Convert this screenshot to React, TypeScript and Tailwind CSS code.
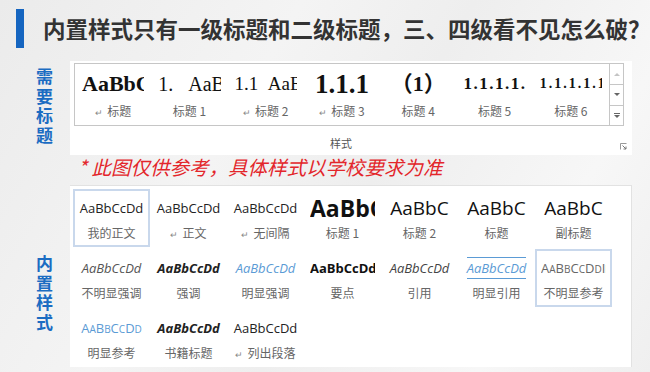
import React from 'react';

const cjk = "font-['Noto_Sans_CJK_SC','Noto_Sans',sans-serif]";
const latin = "font-['Open_Sans','Noto_Sans_CJK_SC',sans-serif]";
const serif = "font-['Liberation_Serif','Noto_Sans_CJK_SC',serif]";

const headings = [
  { sample: 'AaBbCcDd', cls: 'text-[22px] font-bold', label: '标题', mark: true },
  { sample: '1.\u00a0\u00a0\u00a0AaBbCc', cls: 'text-[20px]', label: '标题 1', mark: false },
  { sample: '1.1\u00a0\u00a0AaBbCc', cls: 'text-[19px]', label: '标题 2', mark: true },
  { sample: '1.1.1', cls: 'text-[27px] font-bold', label: '标题 3', mark: true },
  { sample: '（1）', cls: 'text-[22px] font-bold', label: '标题 4', mark: false },
  { sample: '1.1.1.1.', cls: 'text-[17px] font-bold tracking-[1.5px]', label: '标题 5', mark: false },
  { sample: '1.1.1.1.1', cls: 'text-[14px] font-bold tracking-[2px]', label: '标题 6', mark: false },
];

type Item = { sample: string; cls: string; label: string; on?: boolean; mark?: boolean; quote?: boolean; caps?: boolean };

const styles: Item[] = [
  { sample: 'AaBbCcDd', cls: 'text-[13px] text-[#222]', label: '我的正文', on: true },
  { sample: 'AaBbCcDd', cls: 'text-[13px] text-[#222]', label: '正文', mark: true },
  { sample: 'AaBbCcDd', cls: 'text-[13px] text-[#222]', label: '无间隔', mark: true },
  { sample: 'AaBbCcDd', cls: 'text-[23px] font-bold text-[#111]', label: '标题 1' },
  { sample: 'AaBbC', cls: 'text-[19px] text-[#111]', label: '标题 2' },
  { sample: 'AaBbC', cls: 'text-[19px] text-[#111]', label: '标题' },
  { sample: 'AaBbC', cls: 'text-[19px] text-[#111]', label: '副标题' },
  { sample: 'AaBbCcDd', cls: 'text-[13px] italic text-[#555]', label: '不明显强调' },
  { sample: 'AaBbCcDd', cls: 'text-[13px] italic font-bold text-[#222]', label: '强调' },
  { sample: 'AaBbCcDd', cls: 'text-[13px] italic text-[#5b9bd5]', label: '明显强调' },
  { sample: 'AaBbCcDd', cls: 'text-[13px] font-bold text-[#111]', label: '要点' },
  { sample: 'AaBbCcDd', cls: 'text-[13px] italic text-[#444]', label: '引用' },
  { sample: 'AaBbCcDd', cls: 'text-[13px] italic text-[#5b9bd5]', label: '明显引用', quote: true },
  { sample: 'AaBbCcDdIi', cls: 'text-[13px] text-[#666]', label: '不明显参考', on: true, caps: true },
  { sample: 'AaBbCcDd', cls: 'text-[13px] text-[#5b9bd5]', label: '明显参考', caps: true },
  { sample: 'AaBbCcDd', cls: 'text-[13px] italic font-bold text-[#222]', label: '书籍标题' },
  { sample: 'AaBbCcDd', cls: 'text-[13px] text-[#222]', label: '列出段落', mark: true },
];

// fake small caps: lowercase letters drawn as smaller capitals
function SmallCaps({ text }: { text: string }) {
  return (
    <>
      {text.split('').map((c, i) =>
        c === c.toUpperCase() ? (
          <span key={i}>{c}</span>
        ) : (
          <span key={i} className="text-[10px]">{c.toUpperCase()}</span>
        )
      )}
    </>
  );
}

function SideLabel({ text }: { text: string }) {
  return (
    <div className={`w-[17px] flex flex-col text-[17px] leading-[19.5px] font-bold text-[#1b6cc2] ${cjk}`}>
      {text.split('').map((c, i) => (
        <span key={i}>{c}</span>
      ))}
    </div>
  );
}

export default function App() {
  return (
    <div className="w-[650px] h-[372px] overflow-hidden bg-[linear-gradient(120deg,#ebebeb_0%,#f4f4f4_35%,#eeeeee_55%,#f7f7f7_80%,#efefef_100%)]">
      {/* Title */}
      <div className="flex items-center pl-[16px] pt-[9px]">
        <div className="w-[8px] h-[39px] bg-[#1565c0] shrink-0" />
        <h1 className={`ml-[19px] text-[22.5px] leading-[39px] font-bold text-[#333] whitespace-nowrap ${cjk}`}>
          内置样式只有一级标题和二级标题，三、四级看不见怎么破？
        </h1>
      </div>

      {/* Required headings */}
      <div className="flex mt-[13px]">
        <div className="w-[70px] shrink-0 pl-[36px] pt-[5px]">
          <SideLabel text="需要标题" />
        </div>
        <div className="w-[562px] h-[94px] bg-white pl-[4px] pt-[2px] relative">
          <div className="w-[550px] h-[63px] border border-[#c6c6c6] flex">
            <div className="flex-1 grid grid-cols-7">
              {headings.map((h, i) => (
                <div key={i} className="overflow-hidden">
                  <div className={`mx-[7px] h-[40px] leading-[40px] overflow-hidden whitespace-nowrap text-center text-[#111] ${serif} ${h.cls}`}>
                    {h.sample}
                  </div>
                  <div className={`-mt-[3px] h-[20px] leading-[20px] text-center text-[12px] text-[#666] whitespace-nowrap ${cjk}`}>
                    {h.mark && <span className="text-[9px] mr-[4px] text-[#888]">↵</span>}
                    {h.label}
                  </div>
                </div>
              ))}
            </div>
            <div className="w-[14px] border-l border-[#c6c6c6] flex flex-col">
              <div className="h-[21px] flex items-center justify-center border-b border-[#c6c6c6]">
                <svg width="6" height="4" viewBox="0 0 6 4"><path d="M0 4 L3 1 L6 4 Z" fill="#c4c4c4" /></svg>
              </div>
              <div className="h-[21px] flex items-center justify-center border-b border-[#c6c6c6]">
                <svg width="6" height="4" viewBox="0 0 6 4"><path d="M0 0 L3 3 L6 0 Z" fill="#666" /></svg>
              </div>
              <div className="flex-1 flex flex-col items-center justify-center gap-[1px]">
                <div className="w-[6px] h-[1px] bg-[#666]" />
                <svg width="6" height="4" viewBox="0 0 6 4"><path d="M0 0 L3 3 L6 0 Z" fill="#666" /></svg>
              </div>
            </div>
          </div>
          <div className="flex items-center h-[29px] pb-[2px]">
            <span className={`ml-[256px] mt-[8px] text-[11px] text-[#555] ${cjk}`}>样式</span>
          </div>
          <svg className="absolute left-[550px] top-[82px]" width="7" height="7" viewBox="0 0 7 7">
            <path d="M0.5 6.5 V0.5 H6.5" stroke="#999" fill="none" />
            <path d="M2.5 2.5 L6 6 M3.5 6 H6 V3.5" stroke="#777" fill="none" />
          </svg>
        </div>
      </div>

      {/* Note */}
      <div className={`pl-[78px] h-[24px] leading-[24px] text-[19.5px] italic text-[#e3262b] whitespace-nowrap ${cjk}`}>
        * 此图仅供参考，具体样式以学校要求为准
      </div>

      {/* Built-in styles */}
      <div className="flex mt-[6px]">
        <div className="w-[70px] shrink-0 pl-[36px] pt-[68px]">
          <SideLabel text="内置样式" />
        </div>
        <div className="w-[562px] h-[182px] bg-white border-r border-t border-[#e2e2e2] pl-[3px] pt-[3px]">
          <div className="grid grid-cols-[repeat(7,77px)] auto-rows-[60px]">
            {styles.map((s, i) => (
              <div
                key={i}
                className={`h-[58px] border-2 ${s.on ? 'border-[#c9d8ec]' : 'border-transparent'} overflow-hidden`}
              >
                <div className={`mt-[4px] mx-[4px] h-[26px] leading-[26px] overflow-hidden whitespace-nowrap text-center ${latin} ${s.cls}`}>
                  {s.quote ? (
                    <span className="border-t border-b border-[#5b9bd5] leading-[20px] inline-block">{s.sample}</span>
                  ) : s.caps ? (
                    <SmallCaps text={s.sample} />
                  ) : (
                    s.sample
                  )}
                </div>
                <div className={`h-[24px] leading-[24px] text-center text-[12px] text-[#666] whitespace-nowrap ${cjk}`}>
                  {s.mark && <span className="text-[9px] mr-[4px] text-[#888]">↵</span>}
                  {s.label}
                </div>
              </div>
            ))}
          </div>
        </div>
      </div>
    </div>
  );
}
